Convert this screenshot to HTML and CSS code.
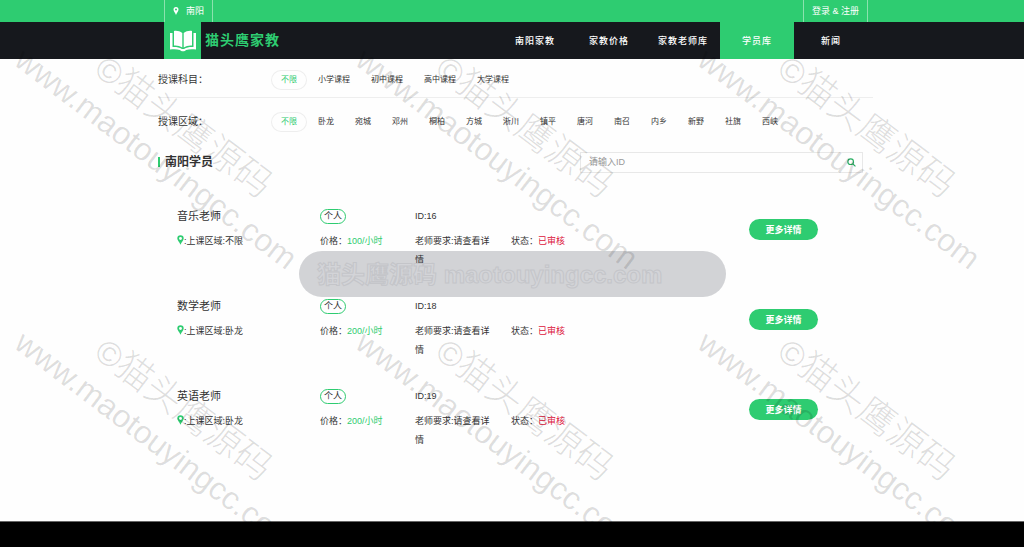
FILE: index.html
```html
<!DOCTYPE html>
<html lang="zh-CN">
<head>
    <meta charset="UTF-8">
    <meta name="viewport" content="width=device-width, initial-scale=1.0">
    <title>南阳学员</title>
    <link rel="stylesheet" href="styles.css">
</head>
<body>
    <div class="topbar">
        <a class="city" href="#">
            <svg class="city-pin" viewBox="0 0 12 16" aria-hidden="true"><path fill-rule="evenodd" d="M6 0a5 5 0 0 1 5 5c0 3-3 6-5 11C4 11 1 8 1 5a5 5 0 0 1 5-5zm0 3a2 2 0 1 0 0 4 2 2 0 0 0 0-4z"/></svg>
            <span>南阳</span>
        </a>
        <a class="login" href="#">登录 &amp; 注册</a>
    </div>

    <header class="header">
        <a class="logo" href="#">
            <span class="logo-box">
                <svg viewBox="0 0 26 22" aria-hidden="true">
                    <path fill="#fff" d="M4 1c3-.5 6 .3 8.300 2v14.500C10 16 7 15.200 4 15.500zM22 1c-3-.5-6 .3-8.300 2v14.500C16 16 19 15.200 22 15.500z"/>
                    <path fill="#fff" d="M0 3h2.500v14c4-.2 6.500.3 9.500 2h2c3-1.700 5.500-2.200 9.500-2V3H26v16.500c-4-.3-7-.3-10 .5-.8 1.700-5.200 1.700-6 0-3-.8-6-.8-10-.5z"/>
                </svg>
            </span>
            <span class="logo-text">猫头鹰家教</span>
        </a>
        <nav class="nav">
            <a href="#">南阳家教</a>
            <a href="#">家教价格</a>
            <a href="#">家教老师库</a>
            <a class="active" href="#">学员库</a>
            <a href="#">新闻</a>
        </nav>
    </header>

    <main class="main">
        <div class="filter">
            <span class="filter-label">授课科目：</span>
            <div class="filter-items">
                <a class="active" href="#">不限</a>
                <a href="#">小学课程</a>
                <a href="#">初中课程</a>
                <a href="#">高中课程</a>
                <a href="#">大学课程</a>
            </div>
        </div>
        <div class="filter">
            <span class="filter-label">授课区域：</span>
            <div class="filter-items">
                <a class="active" href="#">不限</a>
                <a href="#">卧龙</a>
                <a href="#">宛城</a>
                <a href="#">邓州</a>
                <a href="#">桐柏</a>
                <a href="#">方城</a>
                <a href="#">淅川</a>
                <a href="#">镇平</a>
                <a href="#">唐河</a>
                <a href="#">南召</a>
                <a href="#">内乡</a>
                <a href="#">新野</a>
                <a href="#">社旗</a>
                <a href="#">西峡</a>
            </div>
        </div>

        <div class="title-row">
            <h1 class="title">南阳学员</h1>
            <form class="search">
                <input type="text" placeholder="请输入ID" aria-label="请输入ID">
                <button type="button" aria-label="搜索">
                    <svg viewBox="0 0 16 16" aria-hidden="true"><circle cx="6.500" cy="6.500" r="5"/><path d="M10.500 10.500L15 15"/></svg>
                </button>
            </form>
        </div>

        <div class="list">
            <div class="item">
                <div class="col">
                    <h2 class="name">音乐老师</h2>
                    <p><svg class="pin" viewBox="0 0 12 16" aria-hidden="true"><path fill-rule="evenodd" d="M6 0a5.500 5.500 0 0 1 5.500 5.500C11.500 8.500 8 11 6 16 4 11 .5 8.500.5 5.500A5.500 5.500 0 0 1 6 0zm0 3a2.500 2.500 0 1 0 0 5 2.500 2.500 0 0 0 0-5z"/></svg>:上课区域:不限</p>
                </div>
                <div class="col">
                    <div class="head"><span class="tag">个人</span></div>
                    <p>价格：<span class="price">100/小时</span></p>
                </div>
                <div class="col">
                    <div class="head">ID:16</div>
                    <p>老师要求:请查看详情</p>
                </div>
                <div class="col">
                    <div class="head"></div>
                    <p>状态：<span class="status">已审核</span></p>
                </div>
                <button class="more" type="button">更多详情</button>
            </div>
            <div class="item">
                <div class="col">
                    <h2 class="name">数学老师</h2>
                    <p><svg class="pin" viewBox="0 0 12 16" aria-hidden="true"><path fill-rule="evenodd" d="M6 0a5.500 5.500 0 0 1 5.500 5.500C11.500 8.500 8 11 6 16 4 11 .5 8.500.5 5.500A5.500 5.500 0 0 1 6 0zm0 3a2.500 2.500 0 1 0 0 5 2.500 2.500 0 0 0 0-5z"/></svg>:上课区域:卧龙</p>
                </div>
                <div class="col">
                    <div class="head"><span class="tag">个人</span></div>
                    <p>价格：<span class="price">200/小时</span></p>
                </div>
                <div class="col">
                    <div class="head">ID:18</div>
                    <p>老师要求:请查看详情</p>
                </div>
                <div class="col">
                    <div class="head"></div>
                    <p>状态：<span class="status">已审核</span></p>
                </div>
                <button class="more" type="button">更多详情</button>
            </div>
            <div class="item">
                <div class="col">
                    <h2 class="name">英语老师</h2>
                    <p><svg class="pin" viewBox="0 0 12 16" aria-hidden="true"><path fill-rule="evenodd" d="M6 0a5.500 5.500 0 0 1 5.500 5.500C11.500 8.500 8 11 6 16 4 11 .5 8.500.5 5.500A5.500 5.500 0 0 1 6 0zm0 3a2.500 2.500 0 1 0 0 5 2.500 2.500 0 0 0 0-5z"/></svg>:上课区域:卧龙</p>
                </div>
                <div class="col">
                    <div class="head"><span class="tag">个人</span></div>
                    <p>价格：<span class="price">200/小时</span></p>
                </div>
                <div class="col">
                    <div class="head">ID:19</div>
                    <p>老师要求:请查看详情</p>
                </div>
                <div class="col">
                    <div class="head"></div>
                    <p>状态：<span class="status">已审核</span></p>
                </div>
                <button class="more" type="button">更多详情</button>
            </div>
        </div>
    </main>

    <footer class="footer"></footer>

    <!-- watermark -->
    <div class="marks">
        <div class="mark"><div class="mark-text"><span class="mark-name"><i>©</i>猫头鹰源码</span><span>www.maotouyingcc.com</span></div></div>
        <div class="mark"><div class="mark-text"><span class="mark-name"><i>©</i>猫头鹰源码</span><span>www.maotouyingcc.com</span></div></div>
        <div class="mark"><div class="mark-text"><span class="mark-name"><i>©</i>猫头鹰源码</span><span>www.maotouyingcc.com</span></div></div>
        <div class="mark"><div class="mark-text"><span class="mark-name"><i>©</i>猫头鹰源码</span><span>www.maotouyingcc.com</span></div></div>
        <div class="mark"><div class="mark-text"><span class="mark-name"><i>©</i>猫头鹰源码</span><span>www.maotouyingcc.com</span></div></div>
        <div class="mark"><div class="mark-text"><span class="mark-name"><i>©</i>猫头鹰源码</span><span>www.maotouyingcc.com</span></div></div>
    </div>
    <div class="banner">猫头鹰源码 maotouyingcc.com</div>
</body>
</html>
```
FILE: styles.css
```css
* {
    box-sizing: border-box;
}

body {
    margin: 0;
    min-height: 100vh;
    display: flex;
    flex-direction: column;
    position: relative;
    font-family: "Liberation Sans", "Noto Sans CJK SC", sans-serif;
    font-size: 9px;
    color: #333;
    background: #fefefe;
}

a {
    color: inherit;
    text-decoration: none;
}

h1, h2, p {
    margin: 0;
}

/* header */
.topbar {
    display: flex;
    justify-content: space-between;
    height: 22px;
    padding: 0 156px 0 164px;
    background: #2ecc71;
    color: #fff;
    line-height: 20px;
}

.city,
.login {
    display: flex;
    align-items: center;
    padding: 0 8px;
    border-left: 1px solid #8be2ae;
    border-right: 1px solid #8be2ae;
}

.city {
    gap: 7px;
}

.city-pin {
    width: 6px;
    height: 8px;
    fill: #fff;
}

.header {
    display: flex;
    justify-content: space-between;
    height: 37px;
    padding: 0 156px 0 164px;
    background: #16181d;
}

.logo {
    display: flex;
    align-items: center;
    gap: 4px;
}

.logo-box {
    display: flex;
    align-items: center;
    justify-content: center;
    width: 37px;
    height: 37px;
    background: #2ecc71;
}

.logo-box svg {
    width: 26px;
    height: 22px;
}

.logo-text {
    color: #2ecc71;
    font-size: 14px;
    font-weight: bold;
    letter-spacing: 1px;
    line-height: 36px;
    align-self: flex-start;
}

.nav {
    display: flex;
}

.nav a {
    width: 74px;
    color: #fff;
    font-weight: 500;
    letter-spacing: 1px;
    line-height: 38px;
    text-align: center;
}

.nav .active {
    background: #2ecc71;
}

/* filters */
.main {
    flex: 1;
    padding: 0 151px 0 158px;
}

.filter {
    display: flex;
    align-items: center;
    height: 48px;
}

.filter:first-child {
    height: 39px;
    padding-top: 3px;
    border-bottom: 1px solid #eee;
}

.filter-label {
    width: 113px;
    font-size: 10px;
    line-height: 18px;
}

.filter-items {
    display: flex;
    gap: 1px;
    font-size: 8px;
    line-height: 20px;
}

.filter-items a {
    padding: 0 10px;
    border-radius: 10px;
}

.filter-items .active {
    color: #2ecc71;
    box-shadow: inset 0 0 0 1px #eee;
}

.title-row {
    display: flex;
    justify-content: space-between;
    align-items: center;
    height: 32px;
    padding-right: 10px;
}

.title {
    display: flex;
    align-items: center;
    gap: 5px;
    font-size: 12px;
    line-height: 20px;
}

.title::before {
    content: "";
    width: 2px;
    height: 10px;
    background: #2ecc71;
}

.search {
    display: flex;
    width: 283px;
    height: 21px;
    border: 1px solid #e8e8e8;
}

.search input {
    flex: 1;
    min-width: 0;
    padding: 0 8px;
    border: 0;
    background: none;
    font: inherit;
    outline: none;
}

.search input::placeholder {
    color: #999;
}

.search button {
    display: flex;
    align-items: center;
    justify-content: center;
    width: 22px;
    padding: 0;
    border: 0;
    background: none;
}

.search svg {
    width: 9px;
    height: 9px;
    fill: none;
    stroke: #27ae60;
    stroke-width: 2;
}

/* student list */
.list {
    padding: 28px 19px 0;
}

.item {
    display: grid;
    grid-template-columns: 143px 95px 96px 238px auto;
    justify-content: start;
    height: 90px;
}

.name,
.head {
    height: 26px;
    line-height: 21px;
}

.name {
    font-size: 11px;
    font-weight: normal;
}

.col {
    padding-right: 18px;
    line-height: 19px;
}

.pin {
    width: 7px;
    height: 10px;
    fill: #2ecc71;
    vertical-align: -1px;
}

.tag {
    display: inline-block;
    padding: 0 3px;
    border: 1px solid #2ecc71;
    border-radius: 8px;
    line-height: 13px;
}

.price {
    color: #2ecc71;
}

.status {
    color: #dc143c;
}

.more {
    width: 69px;
    height: 21px;
    margin-top: 13px;
    padding: 0;
    border: 0;
    border-radius: 11px;
    background: #2ecc71;
    color: #fff;
    font: inherit;
    font-weight: bold;
}

.footer {
    height: 26px;
    border-top: 1px solid #666;
    background: #000;
}

/* watermark */
.marks {
    position: absolute;
    inset: 0;
    display: grid;
    grid-template-columns: repeat(3, minmax(0, 1fr));
    grid-auto-rows: 283px;
    overflow: hidden;
    pointer-events: none;
}

.mark {
    padding: 3px 0 0 51px;
}

.mark-text {
    display: flex;
    flex-direction: column;
    gap: 4px;
    width: 360px;
    color: rgba(0, 0, 0, 0.13);
    font-size: 32px;
    line-height: 38px;
    white-space: nowrap;
    transform: rotate(37deg);
    transform-origin: 0 0;
}

.mark-name {
    padding-left: 75px;
    font-size: 37px;
    font-weight: 300;
}

.mark-name i {
    font-size: 34px;
    font-style: normal;
}

.mark-text span:last-child {
    padding-left: 6px;
}

.banner {
    position: absolute;
    top: 251px;
    left: 299px;
    width: 427px;
    height: 46px;
    padding-left: 18px;
    border-radius: 23px;
    background: rgba(22, 24, 40, 0.19);
    color: #d3d4d8;
    font-size: 24px;
    font-weight: bold;
    line-height: 48px;
    white-space: nowrap;
    -webkit-text-stroke: 1px #c4c5c9;
}
```
